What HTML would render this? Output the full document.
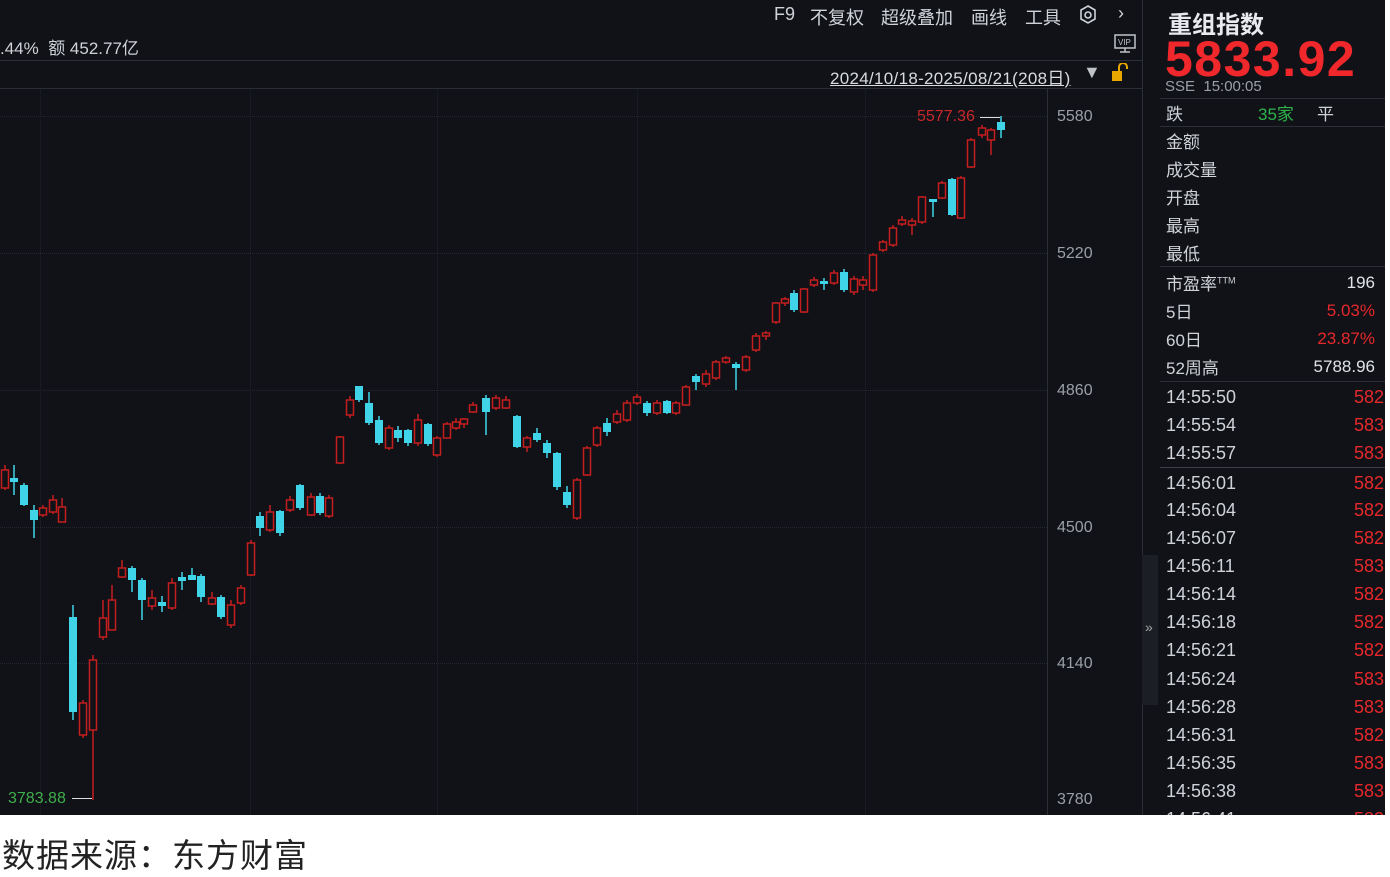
<!DOCTYPE html>
<html><head><meta charset="utf-8"><style>
*{margin:0;padding:0;box-sizing:border-box}
body{width:1390px;height:870px;background:#fff;overflow:hidden;font-family:"Liberation Sans","Noto Sans CJK SC",sans-serif;position:relative}
#dark{position:absolute;left:0;top:0;width:1385px;height:815px;background:#101217;overflow:hidden}
.t{position:absolute;white-space:nowrap;color:#cfd3d8}
.ax{position:absolute;left:1057px;font-size:16px;color:#9aa0a6}
.hl{position:absolute;height:1px;background:#2a2e35}
.g{position:absolute;left:0;width:1047px;border-top:1px dotted #242830}
.vg{position:absolute;top:90px;height:725px;border-left:1px dotted #1f232a}
.r{color:#e8282b}
.rp{position:absolute;left:1166px;font-size:17px;color:#cfd3d8}
.rv{position:absolute;right:10px;font-size:17px;text-align:right}
.tm{position:absolute;left:1166px;font-size:18px;color:#cfd3d8}
.tv{position:absolute;left:1354px;font-size:18px;color:#e8282b}
.tb{position:absolute;top:4px;font-size:18px;color:#cfd3d8;white-space:nowrap}
</style></head><body>
<div id="dark">
<div class="t" style="left:0;top:34px;font-size:17px">.44% &nbsp;额 452.77亿</div>
<div class="tb" style="left:774px">F9</div>
<div class="tb" style="left:810px">不复权</div>
<div class="tb" style="left:881px">超级叠加</div>
<div class="tb" style="left:971px">画线</div>
<div class="tb" style="left:1025px">工具</div>
<svg style="position:absolute;left:1077px;top:4px" width="22" height="22" viewBox="0 0 22 22"><path d="M11 2l7 4v9l-7 4-7-4V6z" fill="none" stroke="#cfd3d8" stroke-width="1.6"/><circle cx="11" cy="11" r="3" fill="none" stroke="#cfd3d8" stroke-width="1.6"/></svg>
<div class="t" style="left:1118px;top:3px;font-size:18px">›</div>
<svg style="position:absolute;left:1114px;top:34px" width="22" height="20"><rect x="1" y="1" width="20" height="13" fill="none" stroke="#bfc3c8" stroke-width="1.5"/><text x="4" y="11" font-size="8" fill="#bfc3c8" font-family="Liberation Sans">VIP</text><path d="M6 18h10M11 14v4" stroke="#bfc3c8" stroke-width="1.5"/></svg>
<div class="hl" style="left:0;top:60px;width:1142px"></div>
<div class="t" style="left:830px;top:64px;font-size:17px;letter-spacing:0.3px;text-decoration:underline;color:#d8dbe0">2024/10/18-2025/08/21(208日)</div>
<div class="t" style="left:1083px;top:62px;font-size:18px;color:#bfc3c8">▼</div>
<svg style="position:absolute;left:1110px;top:63px" width="22" height="20"><rect x="2" y="8" width="10" height="10" fill="#e9a800"/><path d="M9 8V4a4 4 0 0 1 8 0v2" fill="none" stroke="#e9a800" stroke-width="2"/></svg>
<div class="hl" style="left:0;top:88px;width:1142px"></div>
<div style="position:absolute;left:1047px;top:88px;width:1px;height:727px;background:#2a2e35"></div>
<div style="position:absolute;left:1142px;top:0;width:1px;height:815px;background:#2a2e35"></div>
<div style="position:absolute;left:1142px;top:555px;width:16px;height:150px;background:#1b1e24"></div>
<div class="t" style="left:1145px;top:619px;font-size:14px;color:#aaa">»</div>
<div class="g" style="top:116px"></div><div class="g" style="top:253px"></div><div class="g" style="top:390px"></div><div class="g" style="top:527px"></div><div class="g" style="top:663px"></div>
<div class="vg" style="left:40px"></div><div class="vg" style="left:250px"></div><div class="vg" style="left:437px"></div><div class="vg" style="left:637px"></div><div class="vg" style="left:865px"></div>
<div class="ax" style="top:108px">5580</div><div class="ax" style="top:245px">5220</div><div class="ax" style="top:382px">4860</div><div class="ax" style="top:519px">4500</div><div class="ax" style="top:655px">4140</div><div class="ax" style="top:791px">3780</div>
<div class="t" style="left:917px;top:108px;font-size:16px;color:#c8282a">5577.36</div>
<div style="position:absolute;left:980px;top:117px;width:20px;height:1px;background:#ddd"></div>
<div class="t" style="left:8px;top:790px;font-size:16px;color:#3fae4a">3783.88</div>
<div style="position:absolute;left:72px;top:798px;width:20px;height:1px;background:#ddd"></div>
<svg id="ch" style="position:absolute;left:0;top:0" width="1047" height="815"></svg>
<div class="t" style="left:1168px;top:5px;font-size:24px;font-weight:bold;color:#e8eaed">重组指数</div>
<div class="t" style="left:1165px;top:30px;font-size:50px;font-weight:bold;color:#f0282c;letter-spacing:1.5px">5833.92</div>
<div class="t" style="left:1165px;top:78px;font-size:15px;color:#9aa0a6">SSE &nbsp;15:00:05</div>
<div class="hl" style="left:1160px;top:98px;width:225px"></div>
<div class="rp" style="top:100px">跌</div>
<div class="rp" style="top:100px;left:1258px;color:#2fb34a">35家</div>
<div class="rp" style="top:100px;left:1317px">平</div>
<div class="hl" style="left:1160px;top:126px;width:225px"></div>
<div class="rp" style="top:128px">金额</div>
<div class="rp" style="top:156px">成交量</div>
<div class="rp" style="top:184px">开盘</div>
<div class="rp" style="top:212px">最高</div>
<div class="rp" style="top:240px">最低</div>
<div class="hl" style="left:1160px;top:266px;width:225px"></div>
<div class="rp" style="top:270px">市盈率<sup style="font-size:9px">TTM</sup></div><div class="rv" style="top:273px;color:#e0e3e6">196</div>
<div class="rp" style="top:298px">5日</div><div class="rv r" style="top:301px">5.03%</div>
<div class="rp" style="top:326px">60日</div><div class="rv r" style="top:329px">23.87%</div>
<div class="rp" style="top:354px">52周高</div><div class="rv" style="top:357px;color:#e0e3e6">5788.96</div>
<div class="hl" style="left:1160px;top:381px;width:225px"></div>
<div class="hl" style="left:1160px;top:467px;width:225px;background:#3a3e45"></div>
<div id="tl"></div>
</div>
<div style="position:absolute;left:2px;top:829px;font-size:33px;letter-spacing:1px;color:#222;font-family:'Liberation Sans','Noto Sans CJK SC',sans-serif">数据来源：东方财富</div>
<script>
var c=[[5,470,488,465,490,'r'],[14,478,482,465,495,'c'],[24,485,505,483,506,'c'],[34,510,520,505,538,'c'],[43,508,515,505,517,'r'],[53,500,512,495,514,'r'],[62,507,522,498,522,'r'],[73,617,712,605,720,'c'],[83,703,735,700,738,'r'],[93,660,730,655,800,'r'],[103,618,637,600,640,'r'],[112,600,630,585,630,'r'],[122,568,577,560,578,'r'],[132,568,580,566,592,'c'],[142,580,600,578,620,'c'],[152,598,606,590,610,'r'],[162,602,606,596,612,'c'],[172,583,608,578,610,'r'],[182,577,581,572,590,'c'],[192,575,580,568,580,'c'],[201,576,597,574,602,'c'],[212,598,604,592,605,'r'],[221,597,617,595,619,'c'],[231,605,625,600,628,'r'],[241,588,603,585,605,'r'],[251,543,575,540,576,'r'],[260,516,528,512,536,'c'],[270,512,530,505,532,'r'],[280,511,533,510,536,'c'],[290,500,510,496,512,'r'],[300,485,508,484,510,'c'],[311,497,515,493,516,'r'],[320,496,513,493,515,'c'],[329,498,516,495,518,'r'],[340,437,463,436,464,'r'],[350,400,415,396,418,'r'],[359,386,400,386,402,'c'],[369,403,423,392,425,'c'],[379,420,443,416,445,'c'],[389,428,448,425,450,'r'],[398,430,438,426,442,'c'],[408,430,443,429,446,'c'],[418,420,443,414,446,'r'],[428,424,444,423,446,'c'],[437,438,455,436,457,'r'],[447,424,438,422,438,'r'],[456,422,428,418,430,'r'],[464,419,424,418,428,'r'],[473,405,412,402,413,'r'],[486,398,412,395,435,'c'],[496,398,408,395,410,'r'],[506,400,408,396,409,'r'],[517,416,447,415,448,'c'],[527,438,447,436,452,'r'],[537,433,440,428,442,'c'],[547,443,453,440,458,'c'],[557,453,487,452,490,'c'],[567,492,505,486,508,'c'],[577,480,518,478,520,'r'],[587,448,475,446,476,'r'],[597,428,445,426,447,'r'],[607,423,432,418,436,'c'],[617,414,422,410,424,'r'],[627,403,420,400,422,'r'],[637,397,403,394,405,'r'],[647,403,413,401,416,'c'],[657,403,413,400,415,'r'],[667,401,413,400,414,'c'],[676,403,413,401,415,'r'],[686,387,405,385,406,'r'],[696,376,382,374,390,'c'],[706,374,384,370,387,'r'],[716,362,378,360,380,'r'],[726,358,362,356,364,'r'],[736,364,368,362,390,'c'],[746,357,370,355,372,'r'],[756,336,350,333,352,'r'],[766,333,336,331,340,'r'],[776,303,322,302,324,'r'],[785,299,303,297,306,'r'],[794,293,310,290,312,'c'],[804,289,312,288,313,'r'],[814,280,285,277,287,'r'],[824,281,283,278,290,'c'],[834,273,283,270,285,'r'],[844,272,290,269,292,'c'],[854,279,292,276,295,'r'],[863,280,285,276,290,'r'],[873,255,290,253,292,'r'],[883,242,250,240,252,'r'],[893,228,245,225,247,'r'],[902,220,224,216,226,'r'],[912,221,225,218,235,'r'],[922,197,222,196,224,'r'],[933,199,201,199,217,'c'],[942,183,198,181,199,'r'],[952,179,215,178,216,'c'],[961,178,218,176,219,'r'],[971,140,167,138,168,'r'],[982,128,135,125,138,'r'],[991,130,140,128,155,'r'],[1001,122,130,116,138,'c']];
var s='';c.forEach(function(k){var col=k[5]=='r'?'#c41e1e':'#3fd4e8';s+='<line x1="'+k[0]+'" x2="'+k[0]+'" y1="'+k[3]+'" y2="'+k[4]+'" stroke="'+col+'" stroke-width="1.5"/>';var h=Math.max(3,k[2]-k[1]);if(k[5]=='r')s+='<rect x="'+(k[0]-3.5)+'" y="'+k[1]+'" width="7" height="'+h+'" fill="#101217" stroke="'+col+'" stroke-width="1.5"/>';else s+='<rect x="'+(k[0]-4)+'" y="'+k[1]+'" width="8" height="'+h+'" fill="'+col+'"/>';});
document.getElementById('ch').innerHTML=s;
var t=['14:55:50','14:55:54','14:55:57','14:56:01','14:56:04','14:56:07','14:56:11','14:56:14','14:56:18','14:56:21','14:56:24','14:56:28','14:56:31','14:56:35','14:56:38','14:56:41'];
var v=['582','583','583','582','582','582','583','582','582','582','583','583','582','583','583','583'];
var y=[387,415,443,473,500,528,556,584,612,640,669,697,725,753,781,809];var h='';
t.forEach(function(x,i){h+='<div class="tm" style="top:'+y[i]+'px">'+x+'</div><div class="tv" style="top:'+y[i]+'px">'+v[i]+'</div>';});
document.getElementById('tl').innerHTML=h;
</script>
</body></html>
